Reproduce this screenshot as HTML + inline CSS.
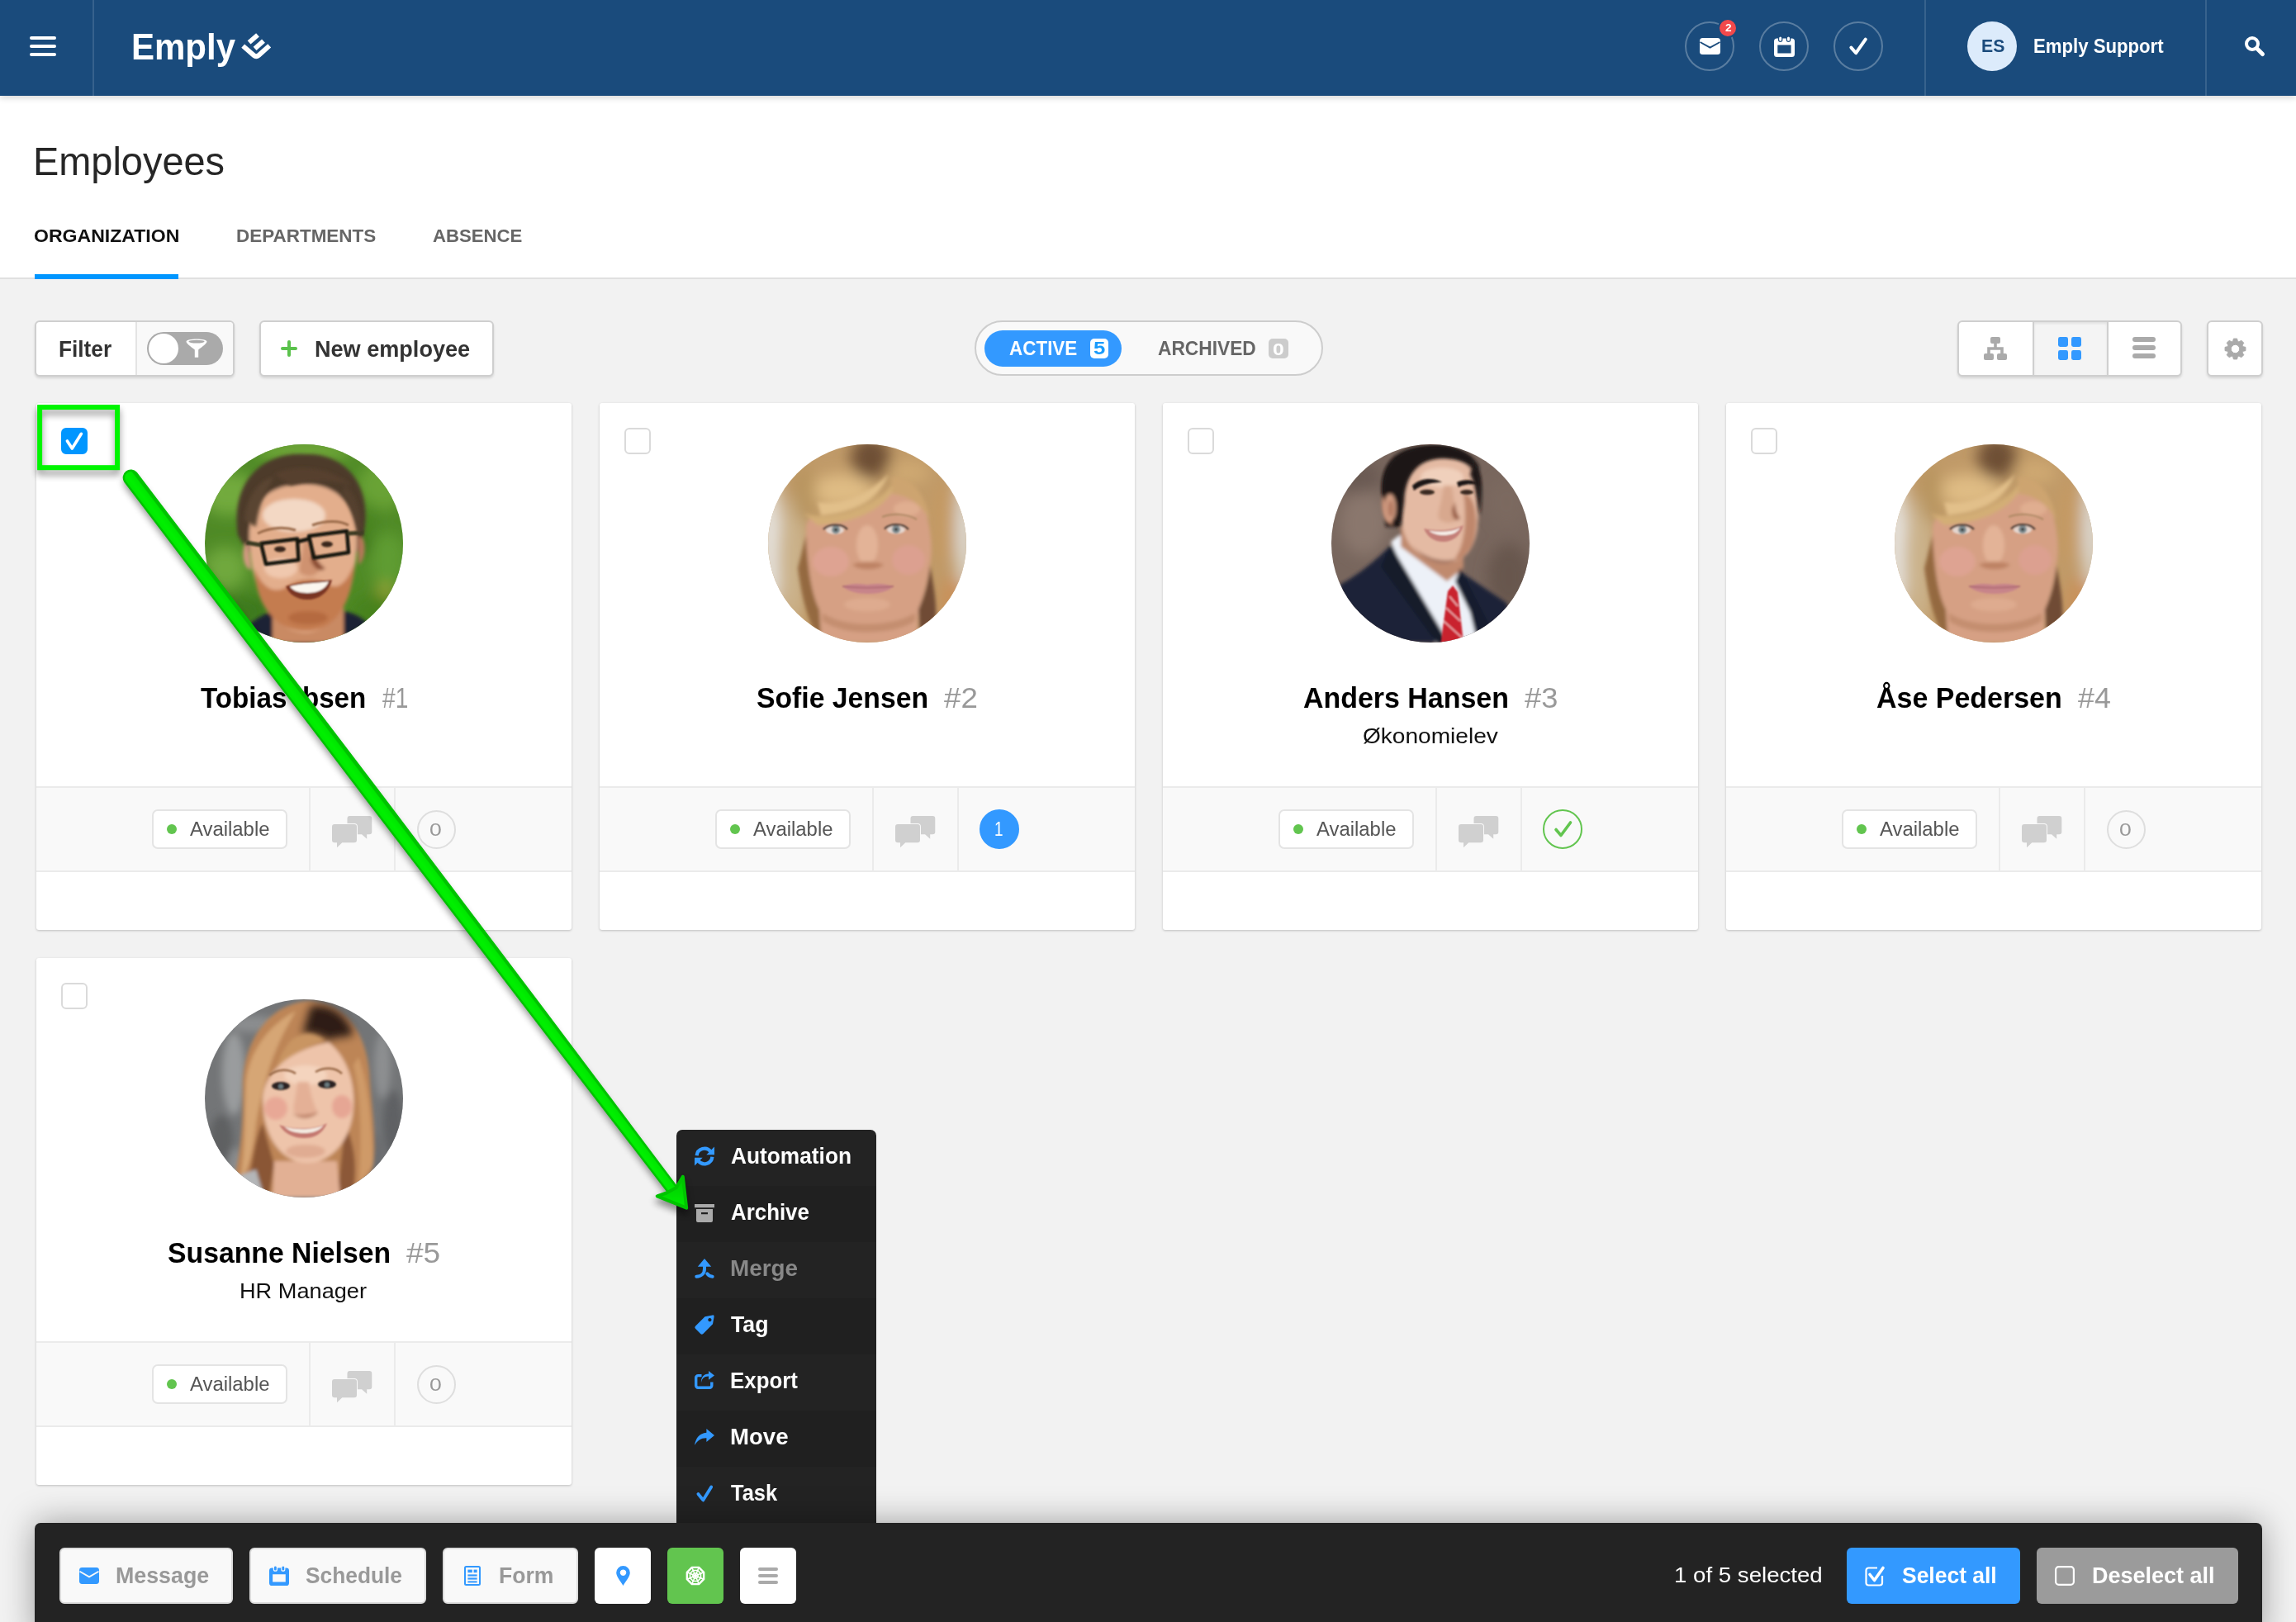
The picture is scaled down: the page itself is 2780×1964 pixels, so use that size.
<!DOCTYPE html><html><head><meta charset="utf-8"><title>Employees</title><style>
*{box-sizing:border-box;margin:0;padding:0}
html,body{width:2780px;height:1964px;overflow:hidden;background:#f2f2f2;font-family:"Liberation Sans",sans-serif;}
body{position:relative}
.a{position:absolute}
.t{position:absolute;white-space:nowrap;line-height:1;transform-origin:0 0;display:block}
svg{position:absolute;overflow:visible}
#hdr{z-index:5;left:0;top:0;width:2780px;height:116px;background:#1a4b7c;box-shadow:0 2px 8px rgba(0,0,0,.18)}
#top{left:0;top:116px;width:2780px;height:222px;background:#fff;border-bottom:2px solid #e0e0e0}
.hc{width:60px;height:60px;border-radius:50%;border:2px solid rgba(255,255,255,.28);top:26px}
.btn{background:#fff;border:2px solid #cfcfcf;border-radius:6px;box-shadow:0 2px 3px rgba(0,0,0,.12)}
.card{width:650px;height:638px;background:#fff;border:2px solid #e6e6e6;border-radius:6px;box-shadow:0 2px 3px rgba(0,0,0,.10)}
.foot{left:0;top:462px;width:646px;height:105px;background:#f9f9f9;border-top:2px solid #ebebeb;border-bottom:2px solid #ebebeb}
.vd{top:0;width:2px;height:101px;background:#ebebeb}
.cb{left:29px;top:28px;width:32px;height:32px;border:2px solid #d9d9d9;border-radius:6px;background:#fff}
.av{left:203px;top:48px;width:240px;height:240px;border-radius:50%;overflow:hidden}
.avail{left:140px;top:26px;width:163px;height:47px;background:#fff;border:2px solid #e3e3e3;border-radius:6px}
.dot{left:17px;top:15px;width:13px;height:13px;border-radius:50%;background:#62c54f}
.cnt{left:459px;top:27px;width:47px;height:47px;border-radius:50%;border:2px solid #dedede}
#menu{left:819px;top:1368px;width:242px;height:480px;background:#232323;border-radius:7px 7px 0 0}
.mi{left:0;width:242px;height:68px}
#bar{left:42px;top:1844px;width:2697px;height:140px;background:#232323;border-radius:7px;box-shadow:0 0 40px rgba(0,0,0,.36)}
.bb{top:30px;height:68px;background:#f9f9f9;border:2px solid #dcdcdc;border-radius:6px}
.bs{top:30px;height:68px;width:68px;background:#fff;border-radius:6px}

.cardbg{width:648px;height:638.5px;background:#fff;border-radius:3px;box-shadow:0 1px 3px rgba(0,0,0,.21)}
.foot{width:648px;height:104px;background:#f9f9f9;border-top:2px solid #ebebeb;border-bottom:2px solid #ebebeb}
.vd{width:2px;height:100px;background:#ebebeb}
.cb{width:32px;height:32px;border:2px solid #dadada;border-radius:6px;background:#fff}
.av{width:240px;height:240px;border-radius:50%;overflow:hidden}
.avail{width:164px;height:48px;background:#fff;border:2px solid #e4e4e4;border-radius:7px}
.dot{width:12.4px;height:12.4px;border-radius:50%;background:#62c54f}
.cnt{width:47px;height:47px;border-radius:50%;border:2px solid #dedede}
</style></head><body>
<div id="hdr" class="a">
<div class="a" style="left:36px;top:44px;width:32px;height:4px;border-radius:2px;background:#fff"></div>
<div class="a" style="left:36px;top:54px;width:32px;height:4px;border-radius:2px;background:#fff"></div>
<div class="a" style="left:36px;top:64px;width:32px;height:4px;border-radius:2px;background:#fff"></div>
<div class="a" style="left:112px;top:0;width:2px;height:116px;background:rgba(255,255,255,.13)"></div>
<span class="t" style="left:159.20px;top:34.20px;font-size:45px;font-weight:700;color:#fff;transform:scaleX(0.9332);">Emply</span>
<svg style="left:291.8px;top:40px" width="37" height="33" viewBox="0 0 37 33"><g fill="none" stroke="#fff" stroke-width="5.8"><path d="M2.2 15.6 L15.3 27.0 Q18.2 29.6 21.2 27.0 L34.2 15.4" stroke-linejoin="round"/><path d="M9.6 11.4 L20 2.4"/><path d="M16.6 18.8 L27 9.6"/></g></svg>
<div class="a hc" style="left:2040px"></div>
<div class="a hc" style="left:2130px"></div>
<div class="a hc" style="left:2220px"></div>
<svg style="left:2057.6px;top:46px" width="25" height="20" viewBox="0 0 25 20"><rect width="25" height="20" rx="3.5" fill="#fff"/><path d="M0.5 5 L12.5 11.6 L24.5 5" fill="none" stroke="#1b4b7c" stroke-width="1.8"/></svg>
<div class="a" style="left:2080px;top:22px;width:24px;height:24px;border-radius:50%;background:#f2494b;border:2px solid #1a4b7c"></div>
<span class="t" style="left:2089.34px;top:27.64px;font-size:12px;font-weight:700;color:#fff;transform:scaleX(1.1379);">2</span>
<svg style="left:2147.8px;top:43.6px" width="25" height="25" viewBox="0 0 25 25"><path d="M3.5 2.6 H21.5 A3.5 3.5 0 0 1 25 6.1 V21.5 A3.5 3.5 0 0 1 21.500 25 H3.5 A3.5 3.5 0 0 1 0 21.5 V6.1 A3.5 3.5 0 0 1 3.5 2.6 Z M4.3 10.6 V20.4 H20.6 V10.6 Z" fill="#fff" fill-rule="evenodd"/><rect x="5.6" y="0" width="4.2" height="6.4" rx="2.1" fill="#fff" stroke="#1b4b7c" stroke-width="1.2"/><rect x="15.4" y="0" width="4.2" height="6.4" rx="2.1" fill="#fff" stroke="#1b4b7c" stroke-width="1.2"/></svg>
<svg style="left:2238px;top:44px" width="24" height="24" viewBox="0 0 24 24"><path d="M3.4 13.6 L9.2 20.2 L20.8 3.6" fill="none" stroke="#fff" stroke-width="4" stroke-linecap="round" stroke-linejoin="round"/></svg>
<div class="a" style="left:2330px;top:0;width:2px;height:116px;background:rgba(255,255,255,.13)"></div>
<div class="a" style="left:2670px;top:0;width:2px;height:116px;background:rgba(255,255,255,.13)"></div>
<div class="a" style="left:2382px;top:26px;width:60px;height:60px;border-radius:50%;background:#dcebfb"></div>
<span class="t" style="left:2398.62px;top:46.00px;font-size:21.5px;font-weight:700;color:#1b4b7c;transform:scaleX(0.9886);">ES</span>
<span class="t" style="left:2462.15px;top:45.03px;font-size:23px;font-weight:700;color:#fff;transform:scaleX(0.9635);">Emply Support</span>
<svg style="left:2717px;top:43px" width="26" height="26" viewBox="0 0 26 26"><circle cx="10" cy="10" r="7" fill="none" stroke="#fff" stroke-width="4"/><path d="M15.5 15.5 L22.5 22.5" stroke="#fff" stroke-width="5" stroke-linecap="round"/></svg>
</div>
<div id="top" class="a"></div>
<span class="t" style="left:39.69px;top:172.06px;font-size:48px;color:#262626;transform:scaleX(0.9771);">Employees</span>
<span class="t" style="left:41.06px;top:274.97px;font-size:22px;font-weight:700;color:#111;transform:scaleX(1.0482);">ORGANIZATION</span>
<span class="t" style="left:285.57px;top:274.97px;font-size:22px;font-weight:700;color:#666;transform:scaleX(1.0208);">DEPARTMENTS</span>
<span class="t" style="left:524.00px;top:274.97px;font-size:22px;font-weight:700;color:#666;transform:scaleX(1.0066);">ABSENCE</span>
<div class="a" style="left:42px;top:332px;width:174px;height:6px;background:#0096ff"></div>
<div class="a btn" style="left:42px;top:388px;width:242px;height:68px;overflow:hidden"><div class="a" style="left:120px;top:0;width:120px;height:64px;background:#f9f9f9;border-left:2px solid #e4e4e4"></div></div>
<span class="t" style="left:71.25px;top:409.54px;font-size:27px;font-weight:700;color:#333;transform:scaleX(0.9718);">Filter</span>
<div class="a" style="left:178px;top:402px;width:92px;height:40px;border-radius:20px;background:#aaa"></div>
<div class="a" style="left:179.800px;top:403.800px;width:36.400px;height:36.400px;border-radius:50%;background:#fff"></div>
<svg style="left:225px;top:410px" width="26" height="24" viewBox="0 0 26 24"><path d="M0.5 3.6 C0.5 -0.6 25.5 -0.6 25.5 3.6 C25.5 6 20 10 15.2 13.4 V22.8 H10.800 V13.4 C6 10 0.5 6 0.5 3.6 Z" fill="#fff"/><ellipse cx="13" cy="3.6" rx="9.6" ry="1.9" fill="#aaa"/></svg>
<div class="a btn" style="left:314px;top:388px;width:284px;height:68px"></div>
<div class="a" style="left:340px;top:420px;width:20px;height:4px;border-radius:2px;background:#5bc24c"></div><div class="a" style="left:348px;top:412px;width:4px;height:20px;border-radius:2px;background:#5bc24c"></div>
<span class="t" style="left:380.80px;top:409.54px;font-size:27px;font-weight:700;color:#333;transform:scaleX(1.0027);">New employee</span>
<div class="a" style="left:1180px;top:388px;width:422px;height:67px;border-radius:34px;border:2px solid #cdcdcd;background:#f9f9f9"></div>
<div class="a" style="left:1192px;top:400px;width:166px;height:44px;border-radius:22px;background:#3399ff"></div>
<span class="t" style="left:1221.51px;top:410.53px;font-size:23px;font-weight:700;color:#fff;transform:scaleX(0.9759);">ACTIVE</span>
<div class="a" style="left:1320px;top:410px;width:22px;height:24px;border-radius:5px;background:#fff"></div>
<span class="t" style="left:1323.80px;top:411.37px;font-size:22px;font-weight:700;color:#1a9bfc;transform:scaleX(1.1712);">5</span>
<span class="t" style="left:1402.11px;top:410.53px;font-size:23px;font-weight:700;color:#666;transform:scaleX(0.9890);">ARCHIVED</span>
<div class="a" style="left:1536px;top:410px;width:24px;height:24px;border-radius:5px;background:#ccc"></div>
<span class="t" style="left:1541.13px;top:413.07px;font-size:20px;font-weight:700;color:#fff;transform:scaleX(1.2371);">0</span>
<div class="a btn" style="left:2370px;top:388px;width:272px;height:68px;overflow:hidden"><div class="a" style="left:89px;top:0;width:92px;height:64px;background:#f4f4f4;border-left:2px solid #cfcfcf;border-right:2px solid #cfcfcf;box-shadow:inset 0 2px 3px rgba(0,0,0,.08)"></div></div>
<svg style="left:2402px;top:408px" width="28" height="28" viewBox="0 0 28 28" fill="#aaa"><rect x="8" y="0" width="12" height="8" rx="2"/><rect x="0" y="20" width="12" height="8" rx="2"/><rect x="16" y="20" width="12" height="8" rx="2"/><path d="M12.200 7 H15.800 V12.200 H23.800 V21 H20.200 V15.800 H7.800 V21 H4.200 V12.200 H12.200 Z"/></svg>
<svg style="left:2492px;top:408px" width="28" height="28" viewBox="0 0 28 28" fill="#3399ff"><rect x="0" y="0" width="12" height="12" rx="2.4"/><rect x="16" y="0" width="12" height="12" rx="2.4"/><rect x="0" y="16" width="12" height="12" rx="2.4"/><rect x="16" y="16" width="12" height="12" rx="2.4"/></svg>
<svg style="left:2582px;top:408px" width="28" height="26" viewBox="0 0 28 26" fill="#aaa"><rect x="0" y="0" width="28" height="6" rx="3"/><rect x="0" y="10" width="28" height="6" rx="3"/><rect x="0" y="20" width="28" height="6" rx="3"/></svg>
<div class="a btn" style="left:2672px;top:388px;width:68px;height:68px"></div>
<svg style="left:2693.5px;top:409.5px" width="25" height="25" viewBox="0 0 25 25"><path d="M9.66 3.33 L10.37 0.08 L14.63 0.08 L15.34 3.33 L16.98 4.01 L19.77 2.21 L22.79 5.23 L20.99 8.02 L21.67 9.66 L24.92 10.37 L24.92 14.63 L21.67 15.34 L20.99 16.98 L22.79 19.77 L19.77 22.79 L16.98 20.99 L15.34 21.67 L14.63 24.92 L10.37 24.92 L9.66 21.67 L8.02 20.99 L5.23 22.79 L2.21 19.77 L4.01 16.98 L3.33 15.34 L0.08 14.63 L0.08 10.37 L3.33 9.66 L4.01 8.02 L2.21 5.23 L5.23 2.21 L8.02 4.01 Z M12.5 7.300 A5.2 5.2 0 1 0 12.500 17.7 A5.2 5.2 0 1 0 12.500 7.300 Z" fill="#aaa" fill-rule="evenodd" stroke="#aaa" stroke-width="1" stroke-linejoin="round"/></svg>
<div class="a cardbg" style="left:44px;top:487.5px;"></div>
<div class="a cb" style="left:74px;top:518px;background:#0096ff;border-color:#0096ff"></div>
<svg style="left:79px;top:523px" width="22" height="22" viewBox="0 0 22 22"><path d="M2.400 11 L8.300 20 L19.400 2.300" fill="none" stroke="#fff" stroke-width="3.600" stroke-linecap="round" stroke-linejoin="round"/></svg>
<div class="a av" style="left:248px;top:537.8px;"><svg width="240" height="240" viewBox="0 0 240 240" style="position:static;display:block;overflow:hidden"><defs><filter id="f1a" x="-20%" y="-20%" width="140%" height="140%"><feGaussianBlur stdDeviation="2.2"/></filter><filter id="f1b" x="-30%" y="-30%" width="160%" height="160%"><feGaussianBlur stdDeviation="9"/></filter><filter id="f1c" x="-30%" y="-30%" width="160%" height="160%"><feGaussianBlur stdDeviation="5"/></filter><filter id="f1d" x="-20%" y="-20%" width="140%" height="140%"><feGaussianBlur stdDeviation="1.1"/></filter></defs>
<rect width="240" height="240" fill="#4f8a26"/>
<g filter="url(#f1b)">
 <ellipse cx="30" cy="60" rx="36" ry="26" fill="#72aa3e"/><ellipse cx="215" cy="50" rx="30" ry="30" fill="#69a336"/>
 <ellipse cx="222" cy="140" rx="22" ry="34" fill="#5f9c30"/><ellipse cx="25" cy="150" rx="26" ry="26" fill="#6fa83e"/><ellipse cx="218" cy="180" rx="10" ry="12" fill="#a8a83a"/><ellipse cx="60" cy="200" rx="16" ry="14" fill="#2f6415"/><ellipse cx="190" cy="120" rx="10" ry="16" fill="#356c19"/>
 <ellipse cx="40" cy="205" rx="30" ry="25" fill="#3d7a1d"/><ellipse cx="205" cy="205" rx="30" ry="25" fill="#47821f"/>
 <ellipse cx="120" cy="8" rx="60" ry="14" fill="#6ea637"/><ellipse cx="60" cy="110" rx="14" ry="30" fill="#4a8423"/>
 <ellipse cx="200" cy="95" rx="12" ry="24" fill="#4a8423"/>
</g>
<g filter="url(#f1a)">
 <path d="M40 250 C45 215 70 205 90 200 L160 200 C185 205 205 212 212 250 Z" fill="#1c2336"/>
 <path d="M82 190 H168 V240 H82 Z" fill="#c98a63"/>
 <path d="M40 110 C30 40 75 8 122 12 C170 10 205 50 192 110 L185 130 L52 130 Z" fill="#4d3b2c"/>
 <path d="M52 120 C44 118 44 150 56 152 Z" fill="#d79a84"/>
 <path d="M186 112 C196 108 196 140 186 146 Z" fill="#b9785c"/>
 <path d="M54 118 C52 78 70 50 116 48 C160 46 184 74 184 112 C186 170 160 228 122 228 C82 228 56 176 54 118 Z" fill="#e3ae8c"/>
 <ellipse cx="108" cy="86" rx="38" ry="20" fill="#f3d8c4"/>
 <ellipse cx="92" cy="150" rx="20" ry="12" fill="#f0c8ae"/>
 <path d="M60 150 C62 200 90 226 122 226 C156 226 178 196 182 142 C172 170 160 176 150 170 C140 160 110 162 100 172 C86 182 70 176 60 150 Z" fill="#c47c50"/>
 <ellipse cx="125" cy="210" rx="24" ry="8" fill="#b56a40"/>
 <path d="M120 118 C118 140 112 150 116 156 C124 162 136 160 138 152 C134 140 130 130 128 116 Z" fill="#cf9270"/>
 <path d="M128 140 C132 150 140 156 146 150 C140 146 134 140 132 128 Z" fill="#8a4c30"/>
</g>
<g filter="url(#f1d)">
 <path d="M98 172 C115 166 140 166 154 164 C150 180 138 188 124 188 C112 188 102 182 98 172 Z" fill="#7a3424"/>
 <path d="M103 172 C118 168 138 168 150 166 C146 176 136 180 124 180 C114 180 106 177 103 172 Z" fill="#fbf6ee"/>
 <ellipse cx="91" cy="127" rx="7" ry="3.500" fill="#3a281e"/><ellipse cx="148" cy="121" rx="7" ry="3.500" fill="#3a281e"/>
 <g fill="none" stroke="#17140f" stroke-width="4.500" stroke-linejoin="round">
  <path d="M68 120 L112 114.500 L113.500 140 L74 145 Z"/><path d="M126 111 L172 105 L174 131 L132 137.500 Z"/>
  <path d="M112 118 L126 114.500"/>
 </g>
 <path d="M68 122 L50 119" stroke="#3a3a22" stroke-width="5"/><path d="M173 108 L192 107" stroke="#3a3a22" stroke-width="5"/>
 <path d="M64 108 C80 100 98 100 110 104" stroke="#9a6a4a" stroke-width="3" fill="none"/><path d="M130 98 C146 92 164 92 174 98" stroke="#9a6a4a" stroke-width="3" fill="none"/>
</g>
<g filter="url(#f1a)"><path d="M48 92 C50 60 70 40 84 40 C74 56 66 70 62 100 Z" fill="#5a4532"/><path d="M84 36 C110 24 150 26 178 50 C160 44 130 42 104 50 Z" fill="#57412f"/><path d="M170 50 C186 64 192 90 188 112 C182 96 178 76 166 60 Z" fill="#54402e"/></g>
</svg></div>
<div class="a foot" style="left:44px;top:952px;"></div>
<div class="a vd" style="left:374px;top:954px;"></div>
<div class="a vd" style="left:476.7px;top:954px;"></div>
<div class="a avail" style="left:184px;top:980px;"></div>
<div class="a dot" style="left:202px;top:997.9px;"></div>
<svg style="left:402px;top:987.8px" width="49" height="39" viewBox="0 0 49 39"><path d="M21.500 0 H45.300 A3 3 0 0 1 48.300 3 V19.200 A3 3 0 0 1 45.300 22.200 H42.200 V27.800 L36 22.200 H21.500 A3 3 0 0 1 18.500 19.200 V3 A3 3 0 0 1 21.500 0 Z" fill="#d0d0d0"/><path d="M3 10.100 H27 A3 3 0 0 1 30 13.100 V29.300 A3 3 0 0 1 27 32.300 H12.300 L6 38.200 V32.300 H3 A3 3 0 0 1 0 29.300 V13.100 A3 3 0 0 1 3 10.100 Z" fill="#d0d0d0" stroke="#f9f9f9" stroke-width="2" paint-order="stroke"/></svg>
<div class="a cnt" style="left:504.5px;top:980.5px;"></div>
<div class="a cardbg" style="left:726px;top:487.5px;"></div>
<div class="a cb" style="left:756px;top:518px;"></div>
<div class="a av" style="left:930px;top:537.8px;"><svg width="240" height="240" viewBox="0 0 240 240" style="position:static;display:block;overflow:hidden"><defs><filter id="f2a" x="-20%" y="-20%" width="140%" height="140%"><feGaussianBlur stdDeviation="2.2"/></filter><filter id="f2b" x="-30%" y="-30%" width="160%" height="160%"><feGaussianBlur stdDeviation="9"/></filter><filter id="f2c" x="-30%" y="-30%" width="160%" height="160%"><feGaussianBlur stdDeviation="5"/></filter><filter id="f2d" x="-20%" y="-20%" width="140%" height="140%"><feGaussianBlur stdDeviation="1.1"/></filter></defs>
<rect width="240" height="240" fill="#c09a68"/>
<g filter="url(#f2b)">
 <ellipse cx="2" cy="120" rx="13" ry="90" fill="#e6e3de"/><ellipse cx="238" cy="105" rx="11" ry="70" fill="#dddad4"/>
 <ellipse cx="30" cy="140" rx="18" ry="80" fill="#cbb28b"/>
 <ellipse cx="124" cy="16" rx="24" ry="26" fill="#6e4f36"/>
 <ellipse cx="90" cy="56" rx="38" ry="20" fill="#dfbc84"/><ellipse cx="170" cy="34" rx="26" ry="14" fill="#cfa972"/>
 <ellipse cx="212" cy="95" rx="14" ry="50" fill="#c59a63"/>
 <ellipse cx="224" cy="190" rx="16" ry="30" fill="#c9915a"/>
 <ellipse cx="44" cy="60" rx="14" ry="34" fill="#b8945f"/>
</g>
<g filter="url(#f2a)">
 <path d="M46 104 C46 94 50 88 56 88 C80 90 110 82 134 68 C146 60 152 50 158 45 C176 50 190 70 193 90 C198 110 199 130 196 146 C192 170 188 186 182 200 L180 240 H62 L62 200 C52 182 46 150 46 104 Z" fill="#d6a084"/>
 <path d="M36 150 C40 180 46 205 56 226 L64 232 L62 200 C52 180 48 150 46 110 Z" fill="#94693f"/>
 <path d="M196 146 C200 170 206 196 202 222 L184 236 L182 200 C190 182 194 166 196 146 Z" fill="#6f4c36"/>
 <path d="M44 84 C70 92 110 84 140 60 C150 50 154 44 160 38 C150 70 120 94 60 98 Z" fill="#d3ae76"/>
 <path d="M60 70 C90 74 120 62 146 36 C136 62 110 82 64 86 Z" fill="#e2c08a"/>
 <ellipse cx="76" cy="142" rx="22" ry="18" fill="#dea392"/><ellipse cx="170" cy="140" rx="20" ry="18" fill="#dca090"/>
 <ellipse cx="168" cy="78" rx="16" ry="9" fill="#e0ae90"/><path d="M150 40 C170 38 190 56 196 92 C186 74 172 62 150 60 Z" fill="#cda470"/>
 <ellipse cx="120" cy="122" rx="13" ry="24" fill="#e3b397"/>
 <path d="M102 146 C110 153 132 153 140 146 C134 141 108 141 102 146 Z" fill="#bd8263"/>
 <path d="M66 204 C90 222 150 222 178 204 L178 214 C150 232 92 232 66 214 Z" fill="#c48e70"/>
 <ellipse cx="120" cy="194" rx="28" ry="8" fill="#deab8f"/>
</g>
<g filter="url(#f2d)">
 <path d="M90 172 C104 167 112 169 120 170 C128 169 136 167 152 172 C140 184 102 184 90 172 Z" fill="#c7848a"/><path d="M90 172 C108 174 132 174 152 172" stroke="#a8646c" stroke-width="1.400" fill="none"/>
 <ellipse cx="81" cy="104" rx="11" ry="5" fill="#e4d6cf"/><ellipse cx="155" cy="103.500" rx="11" ry="5" fill="#e4d6cf"/>
 <circle cx="82" cy="103.500" r="5" fill="#7e8c90"/><circle cx="155" cy="103" r="5" fill="#7e8c90"/>
 <circle cx="82" cy="103.500" r="1.800" fill="#222"/><circle cx="155" cy="103" r="1.800" fill="#222"/>
 <path d="M67 103 C74 96 90 96 96 103" stroke="#54433a" stroke-width="2.400" fill="none"/><path d="M141 102.500 C148 95.500 163 95.500 170 103" stroke="#54433a" stroke-width="2.400" fill="none"/>
 <path d="M138 88 C150 83 168 84 180 91" stroke="#b08a66" stroke-width="2.200" fill="none"/>
</g>
</svg></div>
<div class="a foot" style="left:726px;top:952px;"></div>
<div class="a vd" style="left:1056px;top:954px;"></div>
<div class="a vd" style="left:1158.7px;top:954px;"></div>
<div class="a avail" style="left:866px;top:980px;"></div>
<div class="a dot" style="left:884px;top:997.9px;"></div>
<svg style="left:1084px;top:987.8px" width="49" height="39" viewBox="0 0 49 39"><path d="M21.500 0 H45.300 A3 3 0 0 1 48.300 3 V19.200 A3 3 0 0 1 45.300 22.200 H42.200 V27.800 L36 22.200 H21.500 A3 3 0 0 1 18.500 19.200 V3 A3 3 0 0 1 21.500 0 Z" fill="#d0d0d0"/><path d="M3 10.100 H27 A3 3 0 0 1 30 13.100 V29.300 A3 3 0 0 1 27 32.300 H12.300 L6 38.200 V32.300 H3 A3 3 0 0 1 0 29.300 V13.100 A3 3 0 0 1 3 10.100 Z" fill="#d0d0d0" stroke="#f9f9f9" stroke-width="2" paint-order="stroke"/></svg>
<div class="a cnt" style="left:1185.8px;top:980px;background:#3399ff;border-color:#3399ff;width:48px;height:48px"></div>
<div class="a cardbg" style="left:1408px;top:487.5px;"></div>
<div class="a cb" style="left:1438px;top:518px;"></div>
<div class="a av" style="left:1612px;top:537.8px;"><svg width="240" height="240" viewBox="0 0 240 240" style="position:static;display:block;overflow:hidden"><defs><filter id="f3a" x="-20%" y="-20%" width="140%" height="140%"><feGaussianBlur stdDeviation="2.2"/></filter><filter id="f3b" x="-30%" y="-30%" width="160%" height="160%"><feGaussianBlur stdDeviation="9"/></filter><filter id="f3c" x="-30%" y="-30%" width="160%" height="160%"><feGaussianBlur stdDeviation="5"/></filter><filter id="f3d" x="-20%" y="-20%" width="140%" height="140%"><feGaussianBlur stdDeviation="1.1"/></filter></defs>
<rect width="240" height="240" fill="#78665d"/>
<g filter="url(#f3b)">
 <ellipse cx="40" cy="95" rx="30" ry="40" fill="#8a776d"/><ellipse cx="212" cy="70" rx="24" ry="30" fill="#82706660"/>
 <ellipse cx="215" cy="160" rx="26" ry="40" fill="#67564e"/><ellipse cx="30" cy="40" rx="30" ry="20" fill="#6b5a52"/>
</g>
<g filter="url(#f3a)">
 <path d="M10 170 C30 160 55 140 72 122 L100 150 L150 240 H20 Z" fill="#1a2237"/>
 <path d="M150 150 L212 192 L226 240 H140 Z" fill="#1a2237"/>
 <path d="M72 118 L82 110 L154 144 L175 232 L128 244 Z" fill="#edf1f8"/>
 <path d="M84 100 H160 V150 L140 166 L84 124 Z" fill="#c08a6e"/>
 <path d="M72 122 L60 148 L130 244 L142 240 Z" fill="#141a2c"/>
 <path d="M156 150 L150 166 L186 240 L200 236 Z" fill="#141b2d"/>
 <path d="M62 58 C60 20 80 4 120 2 C160 0 182 20 180 56 L178 100 L66 100 Z" fill="#1b1715"/>
 <path d="M66 62 C58 58 60 92 74 98 Z" fill="#c48a70"/>
 <path d="M86 100 C80 60 92 22 132 16 C172 14 180 40 178 84 C178 120 166 142 142 142 C112 142 92 128 86 100 Z" fill="#e4baa3"/>
 <ellipse cx="134" cy="40" rx="26" ry="12" fill="#f0d0bc"/>
 <path d="M160 60 C176 60 180 100 170 124 C160 140 150 142 150 138 C162 120 164 90 160 60 Z" fill="#bf876c"/>
 <path d="M136 50 C132 80 126 86 132 92 C142 98 152 94 154 88 C150 76 148 66 146 50 Z" fill="#d8a88e"/>
 <path d="M146 78 C146 90 150 94 156 90 C152 84 150 80 150 70 Z" fill="#9a6048"/>
 <path d="M98 122 C112 138 136 144 152 138 C140 150 116 146 98 122 Z" fill="#a87a66"/>
</g>
<g filter="url(#f3d)">
 <path d="M112 102 C130 106 148 104 160 98 C156 112 146 118 136 118 C124 118 116 112 112 102 Z" fill="#c47f78"/>
 <path d="M118 104.500 C132 107 146 106 156 101 C152 108 144 110 136 110 C128 110 122 108 118 104.500 Z" fill="#f6eee8"/>
 <path d="M98 50 C108 40 124 40 134 46 C124 46 110 48 100 56 Z" fill="#1d1816"/><path d="M152 46 C160 42 172 42 178 48 C172 48 160 48 154 52 Z" fill="#1d1816"/>
 <ellipse cx="116" cy="58" rx="9" ry="3.200" fill="#3a2a24"/><ellipse cx="164" cy="58" rx="8" ry="3" fill="#3a2a24"/>
 <path d="M141 178 L147 171 L153 179 L160 240 L132 244 Z" fill="#c9222f"/>
 <path d="M139 198 L156 214 M136 214 L158 234 M143 184 L153 196" stroke="#e8a0a4" stroke-width="2"/>
</g>
<g filter="url(#f3a)"><path d="M62 60 C60 22 82 4 122 2 C150 2 172 10 180 30 C160 16 128 12 108 22 C94 32 88 50 88 70 L84 97 L77 92 C70 82 64 72 62 60 Z" fill="#1b1715"/><path d="M174 24 C184 34 182 70 180 86 C176 70 176 50 168 36 Z" fill="#1b1715"/><ellipse cx="71" cy="77" rx="7.500" ry="17" fill="#cf9a80"/><ellipse cx="72" cy="78" rx="3.500" ry="10" fill="#b47a62"/></g>
</svg></div>
<div class="a foot" style="left:1408px;top:952px;"></div>
<div class="a vd" style="left:1738px;top:954px;"></div>
<div class="a vd" style="left:1840.7px;top:954px;"></div>
<div class="a avail" style="left:1548px;top:980px;"></div>
<div class="a dot" style="left:1566px;top:997.9px;"></div>
<svg style="left:1766px;top:987.8px" width="49" height="39" viewBox="0 0 49 39"><path d="M21.500 0 H45.300 A3 3 0 0 1 48.300 3 V19.200 A3 3 0 0 1 45.300 22.200 H42.200 V27.800 L36 22.200 H21.500 A3 3 0 0 1 18.500 19.200 V3 A3 3 0 0 1 21.500 0 Z" fill="#d0d0d0"/><path d="M3 10.100 H27 A3 3 0 0 1 30 13.100 V29.300 A3 3 0 0 1 27 32.300 H12.300 L6 38.200 V32.300 H3 A3 3 0 0 1 0 29.300 V13.100 A3 3 0 0 1 3 10.100 Z" fill="#d0d0d0" stroke="#f9f9f9" stroke-width="2" paint-order="stroke"/></svg>
<div class="a cnt" style="left:1868px;top:980px;border-color:#62c54f;width:48px;height:48px"></div>
<svg style="left:1880.5px;top:993.3px" width="24" height="22" viewBox="0 0 24 22"><path d="M3 11.500 L9 18.500 L20.500 3" fill="none" stroke="#62c54f" stroke-width="3.600" stroke-linecap="round" stroke-linejoin="round"/></svg>
<div class="a cardbg" style="left:2090px;top:487.5px;"></div>
<div class="a cb" style="left:2120px;top:518px;"></div>
<div class="a av" style="left:2294px;top:537.8px;"><svg width="240" height="240" viewBox="0 0 240 240" style="position:static;display:block;overflow:hidden"><defs><filter id="f4a" x="-20%" y="-20%" width="140%" height="140%"><feGaussianBlur stdDeviation="2.2"/></filter><filter id="f4b" x="-30%" y="-30%" width="160%" height="160%"><feGaussianBlur stdDeviation="9"/></filter><filter id="f4c" x="-30%" y="-30%" width="160%" height="160%"><feGaussianBlur stdDeviation="5"/></filter><filter id="f4d" x="-20%" y="-20%" width="140%" height="140%"><feGaussianBlur stdDeviation="1.1"/></filter></defs>
<rect width="240" height="240" fill="#c09a68"/>
<g filter="url(#f4b)">
 <ellipse cx="2" cy="120" rx="13" ry="90" fill="#e6e3de"/><ellipse cx="238" cy="105" rx="11" ry="70" fill="#dddad4"/>
 <ellipse cx="30" cy="140" rx="18" ry="80" fill="#cbb28b"/>
 <ellipse cx="124" cy="16" rx="24" ry="26" fill="#6e4f36"/>
 <ellipse cx="90" cy="56" rx="38" ry="20" fill="#dfbc84"/><ellipse cx="170" cy="34" rx="26" ry="14" fill="#cfa972"/>
 <ellipse cx="212" cy="95" rx="14" ry="50" fill="#c59a63"/>
 <ellipse cx="224" cy="190" rx="16" ry="30" fill="#c9915a"/>
 <ellipse cx="44" cy="60" rx="14" ry="34" fill="#b8945f"/>
</g>
<g filter="url(#f4a)">
 <path d="M46 104 C46 94 50 88 56 88 C80 90 110 82 134 68 C146 60 152 50 158 45 C176 50 190 70 193 90 C198 110 199 130 196 146 C192 170 188 186 182 200 L180 240 H62 L62 200 C52 182 46 150 46 104 Z" fill="#d6a084"/>
 <path d="M36 150 C40 180 46 205 56 226 L64 232 L62 200 C52 180 48 150 46 110 Z" fill="#94693f"/>
 <path d="M196 146 C200 170 206 196 202 222 L184 236 L182 200 C190 182 194 166 196 146 Z" fill="#6f4c36"/>
 <path d="M44 84 C70 92 110 84 140 60 C150 50 154 44 160 38 C150 70 120 94 60 98 Z" fill="#d3ae76"/>
 <path d="M60 70 C90 74 120 62 146 36 C136 62 110 82 64 86 Z" fill="#e2c08a"/>
 <ellipse cx="76" cy="142" rx="22" ry="18" fill="#dea392"/><ellipse cx="170" cy="140" rx="20" ry="18" fill="#dca090"/>
 <ellipse cx="168" cy="78" rx="16" ry="9" fill="#e0ae90"/><path d="M150 40 C170 38 190 56 196 92 C186 74 172 62 150 60 Z" fill="#cda470"/>
 <ellipse cx="120" cy="122" rx="13" ry="24" fill="#e3b397"/>
 <path d="M102 146 C110 153 132 153 140 146 C134 141 108 141 102 146 Z" fill="#bd8263"/>
 <path d="M66 204 C90 222 150 222 178 204 L178 214 C150 232 92 232 66 214 Z" fill="#c48e70"/>
 <ellipse cx="120" cy="194" rx="28" ry="8" fill="#deab8f"/>
</g>
<g filter="url(#f4d)">
 <path d="M90 172 C104 167 112 169 120 170 C128 169 136 167 152 172 C140 184 102 184 90 172 Z" fill="#c7848a"/><path d="M90 172 C108 174 132 174 152 172" stroke="#a8646c" stroke-width="1.400" fill="none"/>
 <ellipse cx="81" cy="104" rx="11" ry="5" fill="#e4d6cf"/><ellipse cx="155" cy="103.500" rx="11" ry="5" fill="#e4d6cf"/>
 <circle cx="82" cy="103.500" r="5" fill="#7e8c90"/><circle cx="155" cy="103" r="5" fill="#7e8c90"/>
 <circle cx="82" cy="103.500" r="1.800" fill="#222"/><circle cx="155" cy="103" r="1.800" fill="#222"/>
 <path d="M67 103 C74 96 90 96 96 103" stroke="#54433a" stroke-width="2.400" fill="none"/><path d="M141 102.500 C148 95.500 163 95.500 170 103" stroke="#54433a" stroke-width="2.400" fill="none"/>
 <path d="M138 88 C150 83 168 84 180 91" stroke="#b08a66" stroke-width="2.200" fill="none"/>
</g>
</svg></div>
<div class="a foot" style="left:2090px;top:952px;"></div>
<div class="a vd" style="left:2420px;top:954px;"></div>
<div class="a vd" style="left:2522.7px;top:954px;"></div>
<div class="a avail" style="left:2230px;top:980px;"></div>
<div class="a dot" style="left:2248px;top:997.9px;"></div>
<svg style="left:2448px;top:987.8px" width="49" height="39" viewBox="0 0 49 39"><path d="M21.500 0 H45.300 A3 3 0 0 1 48.300 3 V19.200 A3 3 0 0 1 45.300 22.200 H42.200 V27.800 L36 22.200 H21.500 A3 3 0 0 1 18.500 19.200 V3 A3 3 0 0 1 21.500 0 Z" fill="#d0d0d0"/><path d="M3 10.100 H27 A3 3 0 0 1 30 13.100 V29.300 A3 3 0 0 1 27 32.300 H12.300 L6 38.200 V32.300 H3 A3 3 0 0 1 0 29.300 V13.100 A3 3 0 0 1 3 10.100 Z" fill="#d0d0d0" stroke="#f9f9f9" stroke-width="2" paint-order="stroke"/></svg>
<div class="a cnt" style="left:2550.5px;top:980.5px;"></div>
<div class="a cardbg" style="left:44px;top:1159.5px;"></div>
<div class="a cb" style="left:74px;top:1190px;"></div>
<div class="a av" style="left:248px;top:1209.8px;"><svg width="240" height="240" viewBox="0 0 240 240" style="position:static;display:block;overflow:hidden"><defs><filter id="f5a" x="-20%" y="-20%" width="140%" height="140%"><feGaussianBlur stdDeviation="2.2"/></filter><filter id="f5b" x="-30%" y="-30%" width="160%" height="160%"><feGaussianBlur stdDeviation="9"/></filter><filter id="f5c" x="-30%" y="-30%" width="160%" height="160%"><feGaussianBlur stdDeviation="5"/></filter><filter id="f5d" x="-20%" y="-20%" width="140%" height="140%"><feGaussianBlur stdDeviation="1.1"/></filter></defs>
<rect width="240" height="240" fill="#737577"/>
<g filter="url(#f5c)">
 <ellipse cx="35" cy="90" rx="14" ry="50" fill="#9a9c9e"/><ellipse cx="20" cy="170" rx="14" ry="30" fill="#5e6062"/>
 <ellipse cx="215" cy="80" rx="10" ry="40" fill="#8d8f91"/><ellipse cx="228" cy="150" rx="12" ry="40" fill="#5f6163"/>
 <ellipse cx="60" cy="30" rx="30" ry="10" fill="#8b8d8f"/><ellipse cx="200" cy="190" rx="16" ry="30" fill="#6a6c6e"/>
 <ellipse cx="38" cy="200" rx="10" ry="20" fill="#8a8c8e"/>
</g>
<g filter="url(#f5a)">
 <path d="M46 110 C44 50 80 4 126 2 C170 4 198 40 200 100 C204 150 210 190 200 214 L170 240 H60 L36 216 C44 180 46 150 46 110 Z" fill="#bd8556"/>
 <path d="M50 100 C54 60 80 30 110 14 C96 40 76 70 62 150 C56 200 50 210 44 214 C50 170 48 140 50 100 Z" fill="#d6a674"/>
 <path d="M186 70 C198 100 202 150 204 200 L186 226 C190 180 190 120 180 80 Z" fill="#cf9a68"/>
 <path d="M54 214 C60 180 64 160 70 150 L84 200 L78 238 H56 Z" fill="#8a5636"/>
 <path d="M170 150 C182 180 184 200 180 232 L160 240 Z" fill="#8c5838"/>
 <path d="M40 214 L62 206 L72 240 H50 Z" fill="#b4b6b8"/>
 <g filter="url(#f5c)"><path d="M128 8 C150 4 172 16 180 42 C172 48 160 44 150 50 C142 44 130 40 118 42 C122 30 124 20 128 8 Z" fill="#2e1c13"/></g>
 <path d="M104 50 C120 38 132 40 146 50 C120 56 100 70 84 96 C88 76 94 62 104 50 Z" fill="#c99562"/>
 <path d="M82 240 L84 196 H160 L164 240 Z" fill="#e2b094"/>
 <path d="M70 120 C72 90 100 62 150 52 C172 70 182 100 180 130 C178 170 154 198 124 198 C94 198 70 168 70 120 Z" fill="#eec4aa"/>
 <ellipse cx="86" cy="132" rx="14" ry="14" fill="#e8a896"/><ellipse cx="166" cy="130" rx="12" ry="14" fill="#e6a694"/>
 <ellipse cx="122" cy="92" rx="26" ry="12" fill="#f4d4be"/>
 <path d="M112 100 C110 124 104 134 110 138 C120 144 132 142 136 136 C132 126 128 116 126 100 Z" fill="#e4b096"/>
 <path d="M106 138 C114 146 130 146 138 136 C128 140 116 142 106 138 Z" fill="#b87c62"/>
 <ellipse cx="122" cy="184" rx="24" ry="8" fill="#e0ac92"/>
</g>
<g filter="url(#f5d)">
 <path d="M90 152 C106 158 134 158 148 150 C142 164 132 168 120 168 C106 168 96 162 90 152 Z" fill="#c47870"/>
 <path d="M96 154 C110 159 132 158 144 152.500 C138 160 130 162 120 162 C110 162 102 160 96 154 Z" fill="#f4ebe2"/>
 <ellipse cx="92" cy="105" rx="11" ry="5" fill="#2c2420"/><ellipse cx="148" cy="103" rx="11" ry="5" fill="#2c2420"/>
 <circle cx="92" cy="105.500" r="3" fill="#6a7a80"/><circle cx="148" cy="103.500" r="3" fill="#6a7a80"/>
 <path d="M78 92 C88 84 102 84 110 90" stroke="#9a6a48" stroke-width="2.600" fill="none"/><path d="M134 88 C144 82 158 82 166 90" stroke="#9a6a48" stroke-width="2.600" fill="none"/>
</g>
</svg></div>
<div class="a foot" style="left:44px;top:1624px;"></div>
<div class="a vd" style="left:374px;top:1626px;"></div>
<div class="a vd" style="left:476.7px;top:1626px;"></div>
<div class="a avail" style="left:184px;top:1652px;"></div>
<div class="a dot" style="left:202px;top:1669.9px;"></div>
<svg style="left:402px;top:1659.8px" width="49" height="39" viewBox="0 0 49 39"><path d="M21.500 0 H45.300 A3 3 0 0 1 48.300 3 V19.200 A3 3 0 0 1 45.300 22.200 H42.200 V27.800 L36 22.200 H21.500 A3 3 0 0 1 18.500 19.200 V3 A3 3 0 0 1 21.500 0 Z" fill="#d0d0d0"/><path d="M3 10.100 H27 A3 3 0 0 1 30 13.100 V29.300 A3 3 0 0 1 27 32.300 H12.300 L6 38.200 V32.300 H3 A3 3 0 0 1 0 29.300 V13.100 A3 3 0 0 1 3 10.100 Z" fill="#d0d0d0" stroke="#f9f9f9" stroke-width="2" paint-order="stroke"/></svg>
<div class="a cnt" style="left:504.5px;top:1652.5px;"></div>
<span class="t" style="left:243.22px;top:826.67px;font-size:35px;font-weight:700;color:#000;transform:scaleX(0.9478);">Tobias Ibsen</span>
<span class="t" style="left:462.62px;top:826.67px;font-size:35px;color:#999;transform:scaleX(0.8038);">#1</span>
<span class="t" style="left:915.54px;top:826.67px;font-size:35px;font-weight:700;color:#000;transform:scaleX(0.9638);">Sofie Jensen</span>
<span class="t" style="left:1142.60px;top:826.67px;font-size:35px;color:#999;transform:scaleX(1.0484);">#2</span>
<span class="t" style="left:1577.62px;top:826.67px;font-size:35px;font-weight:700;color:#000;transform:scaleX(0.9693);">Anders Hansen</span>
<span class="t" style="left:1845.70px;top:826.67px;font-size:35px;color:#999;transform:scaleX(1.0348);">#3</span>
<span class="t" style="left:2271.92px;top:826.67px;font-size:35px;font-weight:700;color:#000;transform:scaleX(0.9707);">Åse Pedersen</span>
<span class="t" style="left:2515.90px;top:826.67px;font-size:35px;color:#999;transform:scaleX(1.0211);">#4</span>
<span class="t" style="left:202.54px;top:1498.87px;font-size:35px;font-weight:700;color:#000;transform:scaleX(0.9643);">Susanne Nielsen</span>
<span class="t" style="left:491.89px;top:1498.87px;font-size:35px;color:#999;transform:scaleX(1.0588);">#5</span>
<span class="t" style="left:1650.03px;top:877.99px;font-size:26px;color:#111;transform:scaleX(1.0796);">Økonomielev</span>
<span class="t" style="left:290.21px;top:1549.99px;font-size:26px;color:#111;transform:scaleX(1.0449);">HR Manager</span>
<span class="t" style="left:230.10px;top:992.53px;font-size:23px;color:#555;transform:scaleX(1.0381);">Available</span>
<span class="t" style="left:912.10px;top:992.53px;font-size:23px;color:#555;transform:scaleX(1.0381);">Available</span>
<span class="t" style="left:1594.10px;top:992.53px;font-size:23px;color:#555;transform:scaleX(1.0381);">Available</span>
<span class="t" style="left:2276.10px;top:992.53px;font-size:23px;color:#555;transform:scaleX(1.0381);">Available</span>
<span class="t" style="left:230.10px;top:1664.53px;font-size:23px;color:#555;transform:scaleX(1.0381);">Available</span>
<span class="t" style="left:520.46px;top:993.56px;font-size:22.6px;color:#999;transform:scaleX(1.1743);">0</span>
<span class="t" style="left:2566.46px;top:993.56px;font-size:22.6px;color:#999;transform:scaleX(1.1743);">0</span>
<span class="t" style="left:520.46px;top:1665.56px;font-size:22.6px;color:#999;transform:scaleX(1.1743);">0</span>
<span class="t" style="left:1204.28px;top:992.28px;font-size:24px;color:#fff;transform:scaleX(0.7885);">1</span>
<div id="menu" class="a"></div>
<span class="t" style="left:885.02px;top:1387.44px;font-size:27px;font-weight:700;color:#fff;transform:scaleX(0.9736);">Automation</span>
<div class="a" style="left:819px;top:1436px;width:242px;height:68px;background:#202020"></div>
<span class="t" style="left:885.03px;top:1455.44px;font-size:27px;font-weight:700;color:#fff;transform:scaleX(0.9579);">Archive</span>
<span class="t" style="left:883.74px;top:1523.44px;font-size:27px;font-weight:700;color:#888;transform:scaleX(1.0312);">Merge</span>
<div class="a" style="left:819px;top:1572px;width:242px;height:68px;background:#202020"></div>
<span class="t" style="left:885.30px;top:1591.44px;font-size:27px;font-weight:700;color:#fff;transform:scaleX(0.9886);">Tag</span>
<span class="t" style="left:883.88px;top:1659.44px;font-size:27px;font-weight:700;color:#fff;transform:scaleX(0.9580);">Export</span>
<div class="a" style="left:819px;top:1708px;width:242px;height:68px;background:#202020"></div>
<span class="t" style="left:883.76px;top:1727.44px;font-size:27px;font-weight:700;color:#fff;transform:scaleX(1.0211);">Move</span>
<span class="t" style="left:885.32px;top:1795.44px;font-size:27px;font-weight:700;color:#fff;transform:scaleX(0.9427);">Task</span>
<svg style="left:841px;top:1388px" width="24" height="24" viewBox="0 0 24 24"><g fill="none" stroke="#3399ff" stroke-width="4.200"><path d="M2.600 11.200 A9.500 9.500 0 0 1 19.600 6.400"/><path d="M21.400 12.800 A9.500 9.500 0 0 1 4.400 17.600"/></g><path d="M24 0.500 V10.200 H14.300 Z" fill="#3399ff"/><path d="M0 23.500 V13.800 H9.700 Z" fill="#3399ff"/></svg>
<svg style="left:841px;top:1457.8px" width="24" height="22" viewBox="0 0 24 22"><rect x="0" y="0" width="24" height="4.200" fill="#aaa"/><path d="M2 6 H22 V20 A2 2 0 0 1 20 22 H4 A2 2 0 0 1 2 20 Z M8 10 V12.200 H16 V10 Z" fill="#aaa" fill-rule="evenodd"/></svg>
<svg style="left:841px;top:1524px" width="24" height="24" viewBox="0 0 24 24"><g fill="none" stroke="#3399ff" stroke-width="4" stroke-linecap="round"><path d="M12 8 V12.500 C12 18 8 21.600 2.300 21.800"/><path d="M15.300 18.300 C17 20.600 19.500 21.600 21.700 21.800"/></g><path d="M12 0 L20.200 9.800 H3.800 Z" fill="#3399ff"/></svg>
<svg style="left:841px;top:1591.5px" width="24" height="25" viewBox="0 0 24 25"><path d="M12.500 2.200 L21.600 0.400 Q24 0 23.600 2.400 L22 11.300 L10.400 23 Q8.800 24.500 7.200 23 L1 16.800 Q-0.500 15.200 1 13.700 Z M18.400 4 A2.100 2.100 0 1 0 18.410 4 Z" fill="#3399ff" fill-rule="evenodd"/></svg>
<svg style="left:841px;top:1660px" width="24" height="22" viewBox="0 0 24 22"><path d="M8.500 5.600 H4.200 A2.500 2.500 0 0 0 1.700 8.100 V17.800 A2.500 2.500 0 0 0 4.200 20.300 H18.300 A2.500 2.500 0 0 0 20.800 17.800 V13.500" fill="none" stroke="#3399ff" stroke-width="3.400"/><path d="M8 14.500 C8.500 9 12 6.200 17 6.400 V10.800 L24 5.400 L17 0 V3.400 C11 3.400 7.500 8 8 14.500 Z" fill="#3399ff"/></svg>
<svg style="left:841px;top:1729.8px" width="24" height="20" viewBox="0 0 24 20"><path d="M14.400 0 L24 8 L14.400 16 V11.200 C8 11 3.500 14 0 20 C1.500 11 6 5.500 14.400 4.800 Z" fill="#3399ff"/></svg>
<svg style="left:843.1px;top:1797.6px" width="21" height="21" viewBox="0 0 21 21"><path d="M2.400 11 L8.300 18.400 L18.200 2.400" fill="none" stroke="#3399ff" stroke-width="3.800" stroke-linecap="round" stroke-linejoin="round"/></svg>
<div id="bar" class="a">
<div class="a bb" style="left:30px;width:210px"></div><div class="a bb" style="left:260px;width:214px"></div><div class="a bb" style="left:494px;width:164px"></div>
<div class="a bs" style="left:678px"></div><div class="a bs" style="left:766px;background:#62c54f"></div><div class="a bs" style="left:854px"></div>
<div class="a" style="left:2194px;top:30px;width:210px;height:68px;border-radius:6px;background:#3399ff"></div>
<div class="a" style="left:2424px;top:30px;width:244px;height:68px;border-radius:6px;background:#9b9b9b"></div>
</div>
<svg style="left:96px;top:1898px" width="24" height="20" viewBox="0 0 24 20"><rect width="24" height="20" rx="3.400" fill="#3399ff"/><path d="M0.500 4.800 L12 11.400 L23.500 4.800" fill="none" stroke="#f9f9f9" stroke-width="1.800"/></svg>
<svg style="left:326px;top:1896px" width="24" height="24" viewBox="0 0 25 25"><path d="M3.500 2.600 H21.500 A3.500 3.500 0 0 1 25 6.100 V21.500 A3.500 3.500 0 0 1 21.500 25 H3.500 A3.500 3.500 0 0 1 0 21.500 V6.100 A3.500 3.500 0 0 1 3.500 2.600 Z M4.300 10.600 V20.400 H20.600 V10.600 Z" fill="#3399ff" fill-rule="evenodd"/><rect x="5.600" y="0" width="4.200" height="6.400" rx="2.100" fill="#3399ff" stroke="#f9f9f9" stroke-width="1.200"/><rect x="15.400" y="0" width="4.200" height="6.400" rx="2.100" fill="#3399ff" stroke="#f9f9f9" stroke-width="1.200"/></svg>
<svg style="left:562px;top:1896px" width="20" height="24" viewBox="0 0 20 24"><rect x="1" y="1" width="18" height="22" rx="1.500" fill="none" stroke="#3399ff" stroke-width="2"/><g fill="#3399ff"><rect x="4.400" y="4.600" width="5.400" height="3.600"/><rect x="11.600" y="4.600" width="4" height="3.600"/><rect x="4.400" y="10.400" width="11.200" height="2.200"/><rect x="4.400" y="14.400" width="11.200" height="2.200"/><rect x="4.400" y="18.400" width="11.200" height="2"/></g></svg>
<svg style="left:745.800px;top:1896px" width="17" height="24" viewBox="0 0 17 24"><path d="M8.500 0 A8.300 8.300 0 0 1 16.800 8.300 C16.800 13 11.500 19 8.500 24 C5.500 19 0.200 13 0.200 8.300 A8.300 8.300 0 0 1 8.500 0 Z M8.500 4.400 A3.800 3.800 0 1 0 8.510 4.400 Z" fill="#3399ff" fill-rule="evenodd"/></svg>
<svg style="left:830px;top:1896px" width="24" height="24" viewBox="0 0 24 24"><g fill="none" stroke="#fff" stroke-linejoin="round"><polygon points="22.16,16.21 16.21,22.16 7.79,22.16 1.84,16.21 1.84,7.79 7.79,1.84 16.21,1.84 22.16,7.79" stroke-width="2.400"/><polygon points="18.47,14.68 14.68,18.47 9.32,18.47 5.53,14.68 5.53,9.32 9.32,5.53 14.68,5.53 18.47,9.32" stroke-width="1.600"/><polygon points="15.14,13.30 13.30,15.14 10.70,15.14 8.86,13.30 8.86,10.70 10.70,8.86 13.30,8.86 15.14,10.70" stroke-width="1.400"/><g stroke-width="1.500"><path d="M12 12 L22.16 16.21"/><path d="M12 12 L16.21 22.16"/><path d="M12 12 L7.79 22.16"/><path d="M12 12 L1.84 16.21"/><path d="M12 12 L1.84 7.79"/><path d="M12 12 L7.79 1.84"/><path d="M12 12 L16.21 1.84"/><path d="M12 12 L22.16 7.79"/></g></g></svg>
<svg style="left:918px;top:1898px" width="24" height="20" viewBox="0 0 24 20" fill="#aaa"><rect width="24" height="4" rx="2"/><rect y="8" width="24" height="4" rx="2"/><rect y="16" width="24" height="4" rx="2"/></svg>
<span class="t" style="left:139.51px;top:1894.84px;font-size:27px;font-weight:700;color:#999;transform:scaleX(0.9919);">Message</span>
<span class="t" style="left:370.32px;top:1894.84px;font-size:27px;font-weight:700;color:#999;transform:scaleX(0.9747);">Schedule</span>
<span class="t" style="left:603.83px;top:1894.84px;font-size:27px;font-weight:700;color:#999;transform:scaleX(0.9844);">Form</span>
<span class="t" style="left:2026.71px;top:1893.56px;font-size:26.5px;color:#fff;transform:scaleX(1.0427);">1 of 5 selected</span>
<svg style="left:2257.500px;top:1895.500px" width="25" height="25" viewBox="0 0 25 25"><path d="M21 12 V20.500 A3 3 0 0 1 18 23.500 H4.500 A3 3 0 0 1 1.500 20.500 V5.500 A3 3 0 0 1 4.500 2.500 H15" fill="none" stroke="#fff" stroke-width="2.200"/><path d="M6 10.500 L11.500 17.500 L22 2.500" fill="none" stroke="#fff" stroke-width="3.600" stroke-linecap="round" stroke-linejoin="round"/></svg>
<span class="t" style="left:2303.31px;top:1894.84px;font-size:27px;font-weight:700;color:#fff;transform:scaleX(0.9799);">Select all</span>
<svg style="left:2488px;top:1896px" width="24" height="24" viewBox="0 0 24 24"><rect x="1.100" y="1.100" width="21.800" height="21.800" rx="3.600" fill="none" stroke="#fff" stroke-width="2.200"/></svg>
<span class="t" style="left:2533.20px;top:1894.84px;font-size:27px;font-weight:700;color:#fff;transform:scaleX(0.9986);">Deselect all</span>
<svg style="left:0;top:0" width="2780" height="1964" viewBox="0 0 2780 1964"><defs><filter id="sh" x="-5%" y="-5%" width="110%" height="110%"><feGaussianBlur stdDeviation="4"/></filter><linearGradient id="sg" gradientUnits="userSpaceOnUse" x1="165.96" y1="571.65" x2="150.04" y2="583.75"><stop offset="0" stop-color="#00c200"/><stop offset=".2" stop-color="#00c200"/><stop offset=".27" stop-color="#00e600"/><stop offset=".6" stop-color="#00f000"/><stop offset=".9" stop-color="#00e800"/><stop offset=".95" stop-color="#00c400"/><stop offset="1" stop-color="#00c400"/></linearGradient><linearGradient id="hg" x1="0" y1="0" x2="0" y2="1"><stop offset="0" stop-color="#00c800"/><stop offset="1" stop-color="#00ee00"/></linearGradient></defs>
<g filter="url(#sh)" opacity=".42" transform="translate(0 6)"><rect x="48.100" y="493.100" width="94" height="73.100" fill="none" stroke="#000" stroke-width="6"/><path d="M164.8 572.5 A8.6 8.6 0 0 0 151.2 582.9 L447.3 972.2 L645.5 1231.1 L811.3 1446.4 L820.8 1439.2 L657.6 1221.9 L461.0 961.8 Z" fill="#000"/><path d="M831.2 1462.7 L826.8 1424.7 L818.9 1438.0 L807.0 1444.5 L795.7 1448.4 Z" fill="#000" stroke="#000" stroke-width="5" stroke-linejoin="round"/></g>
<rect x="48.100" y="493.100" width="94" height="73.100" fill="none" stroke="#00f500" stroke-width="6"/>
<path d="M164.8 572.5 A8.6 8.6 0 0 0 151.2 582.9 L447.3 972.2 L645.5 1231.1 L811.3 1446.4 L820.8 1439.2 L657.6 1221.9 L461.0 961.8 Z" fill="url(#sg)" stroke="#00c200" stroke-width="2.400" stroke-linejoin="round"/>
<path d="M831.2 1462.7 L826.8 1424.7 L818.9 1438.0 L807.0 1444.5 L795.7 1448.4 Z" fill="url(#hg)" stroke="#00c400" stroke-width="4" stroke-linejoin="round"/>
</svg>
</body></html>
